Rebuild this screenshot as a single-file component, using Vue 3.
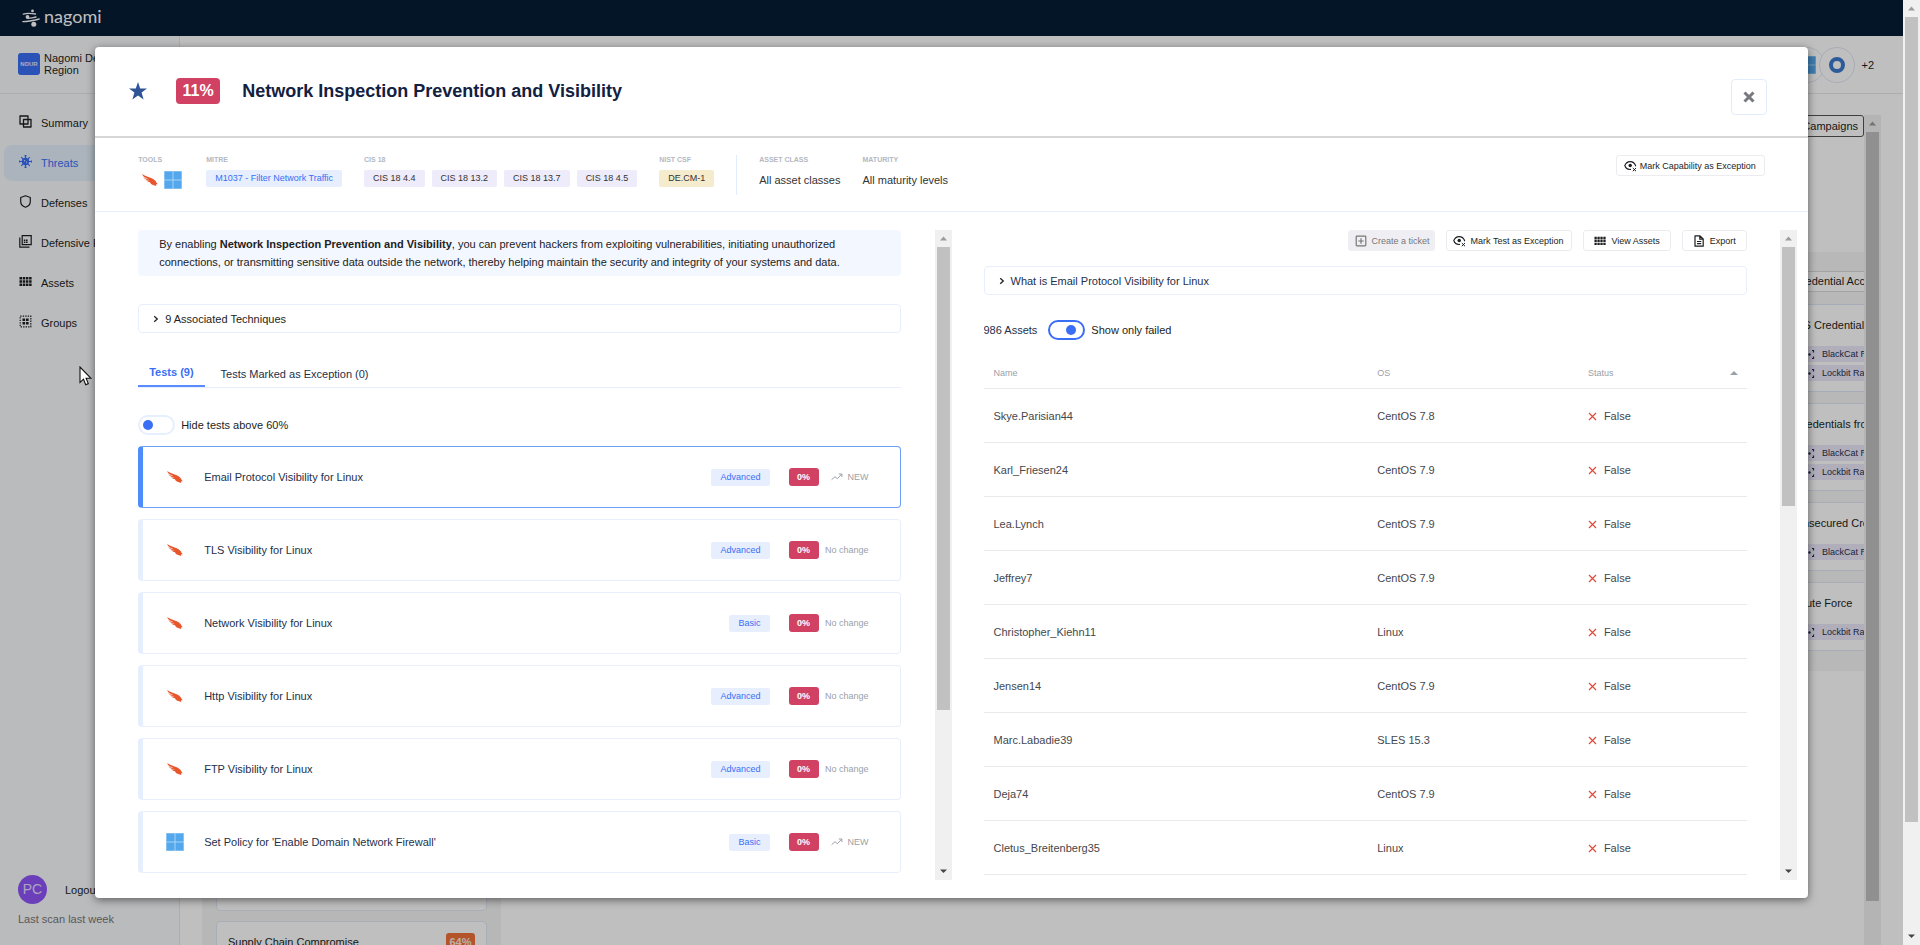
<script setup>
import { ref } from 'vue'

const nav = [
  { label: 'Summary', icon: 'i-summary' },
  { label: 'Threats', icon: 'i-threat', active: true },
  { label: 'Defenses', icon: 'i-shield' },
  { label: 'Defensive Plan', icon: 'i-plan' },
  { label: 'Assets', icon: 'i-grid' },
  { label: 'Groups', icon: 'i-groups' },
]

const cisTags = ['CIS 18 4.4', 'CIS 18 13.2', 'CIS 18 13.7', 'CIS 18 4.5']

const tests = [
  { name: 'Email Protocol Visibility for Linux', level: 'Advanced', score: '0%', trend: 'NEW', icon: 'i-falcon', active: true },
  { name: 'TLS Visibility for Linux', level: 'Advanced', score: '0%', trend: 'No change', icon: 'i-falcon' },
  { name: 'Network Visibility for Linux', level: 'Basic', score: '0%', trend: 'No change', icon: 'i-falcon' },
  { name: 'Http Visibility for Linux', level: 'Advanced', score: '0%', trend: 'No change', icon: 'i-falcon' },
  { name: 'FTP Visibility for Linux', level: 'Advanced', score: '0%', trend: 'No change', icon: 'i-falcon' },
  { name: "Set Policy for 'Enable Domain Network Firewall'", level: 'Basic', score: '0%', trend: 'NEW', icon: 'i-windows' },
]

const assets = [
  ['Skye.Parisian44', 'CentOS 7.8'],
  ['Karl_Friesen24', 'CentOS 7.9'],
  ['Lea.Lynch', 'CentOS 7.9'],
  ['Jeffrey7', 'CentOS 7.9'],
  ['Christopher_Kiehn11', 'Linux'],
  ['Jensen14', 'CentOS 7.9'],
  ['Marc.Labadie39', 'SLES 15.3'],
  ['Deja74', 'CentOS 7.9'],
  ['Cletus_Breitenberg35', 'Linux'],
]

const techniques = [
  { name: 'OS Credential Dumping', tags: ['BlackCat Ransomware', 'Lockbit Ransomware'] },
  { name: 'Credentials from Password Stores', tags: ['BlackCat Ransomware', 'Lockbit Ransomware'] },
  { name: 'Unsecured Credentials', tags: ['BlackCat Ransomware'] },
  { name: 'Brute Force', tags: ['Lockbit Ransomware'] },
]

const hideAbove = ref(false)
const onlyFailed = ref(true)
</script>

<template>
  <div class="window">
    <svg class="symbols" aria-hidden="true">
      <symbol id="i-summary" viewBox="0 0 13 13"><path d="M1 1h8v8H1zM4.500 4.500h7.500v7.500h-7.500z" fill="none" stroke="currentColor" stroke-width="1.300" stroke-linejoin="round" /></symbol>
      <symbol id="i-threat" viewBox="0 0 13 13">
        <circle cx="6.500" cy="6.500" r="3.700" fill="currentColor" />
        <path d="M6.500 0.500v12M0.500 6.500h12M2.200 2.200l8.600 8.600M10.800 2.200L2.200 10.800M5.500 0.600h2M5.500 12.400h2M0.600 5.500v2M12.400 5.500v2" stroke="currentColor" stroke-width="1.200" fill="none" />
        <circle cx="5.600" cy="5.800" r=".7" fill="#cfe0ff" /><circle cx="7.600" cy="7.200" r=".6" fill="#cfe0ff" />
      </symbol>
      <symbol id="i-shield" viewBox="0 0 13 13"><path d="M6.500 .8L11.300 2.500V6.500C11.300 9.300 9.300 11.400 6.500 12.300C3.700 11.400 1.700 9.300 1.700 6.500V2.500z" fill="none" stroke="currentColor" stroke-width="1.200" stroke-linejoin="round" /></symbol>
      <symbol id="i-plan" viewBox="0 0 13 13"><path d="M3.200 .7h9v9h-9zM.8 2.500v9.700h9.700" fill="none" stroke="currentColor" stroke-width="1.200" /><path d="M4.800 4.500h1.600v1.400H4.800zM7 4.500h1.600v1.400H7zM4.800 6.500h1.600v1.400H4.800zM7 6.500h1.600v1.400H7z" fill="currentColor" /></symbol>
      <symbol id="i-grid" viewBox="0 0 13 13"><path d="M.5 2h2.500v2.500H.5zM3.700 2h2.500v2.500H3.700zM6.900 2h2.500v2.500H6.900zM10.100 2h2.500v2.500h-2.500zM.5 5.200h2.500v2.500H.5zM3.700 5.200h2.500v2.500H3.700zM6.900 5.200h2.500v2.500H6.900zM10.100 5.200h2.500v2.500h-2.500zM.5 8.400h2.500v2.500H.5zM3.700 8.400h2.500v2.500H3.700zM6.900 8.400h2.500v2.500H6.900zM10.100 8.400h2.500v2.500h-2.500z" fill="currentColor" /></symbol>
      <symbol id="i-groups" viewBox="0 0 13 13"><rect x="1.200" y="1.200" width="10.600" height="10.600" fill="none" stroke="currentColor" stroke-width="1.200" stroke-dasharray="1.400 1.100" /><path d="M3.500 3.500h2.600v2.600H3.500zM7 3.500h2.600v2.600H7zM3.500 7h2.600v2.600H3.500zM7 7h2.600v2.600H7z" fill="currentColor" /></symbol>
      <symbol id="i-falcon" viewBox="0 0 16 12"><path d="M.2 0C2.500 2 6.200 2.700 9.700 4.300C12.500 5.600 14.200 7.200 14.500 8.800C15 9.200 15.500 9.700 15.600 10.500C15 10.200 14.400 10.300 14 10.500C14.200 11 14.300 11.400 14.200 12C13.200 11.300 12.300 11.200 11.200 10.900C9.300 10.400 8 9.500 8.100 8.300C6.600 7.800 4.900 7.200 4 5.900C5.300 6.500 6.500 6.700 7.700 6.900C5.200 6 2.200 4.900 1.300 2.900C2.900 4.200 4.600 4.800 6.600 5.200C4.200 4 .9 3 .2 0z" fill="#e8562c" /></symbol>
      <symbol id="i-windows" viewBox="0 0 18 18"><path d="M0 0h18v18H0z" fill="#a9d4f7" /><path d="M.6.6h7.900v7.900H.6zM9.500.6h7.900v7.900H9.500zM.6 9.500h7.900v7.900H.6zM9.500 9.500h7.900v7.900H9.500z" fill="#53a7ec" /></symbol>
      <symbol id="i-eye" viewBox="0 0 13 12"><path d="M7 9.400C4 9.800 1.600 8 .8 5.500C1.800 3 3.800 1.600 6.200 1.600S10.600 3 11.600 5.500L11.300 6.300" fill="none" stroke="currentColor" stroke-width="1.100" /><circle cx="6.200" cy="5.500" r="1.700" fill="currentColor" /><path d="M8.800 8l3.200 3.200M12 8l-3.200 3.200" stroke="currentColor" stroke-width="1" /></symbol>
      <symbol id="i-plus" viewBox="0 0 12 12"><rect x="1.200" y="1.200" width="9.600" height="9.600" rx=".8" fill="none" stroke="currentColor" stroke-width="1.200" /><path d="M6 3.300v5.400M3.300 6h5.400" stroke="currentColor" stroke-width="1.200" /></symbol>
      <symbol id="i-doc" viewBox="0 0 12 12"><path d="M2 .8h5L10.200 4v7.200H2zM6.800.8v3.400h3.400M4 6.500h4.200M4 8.700h4.200" fill="none" stroke="currentColor" stroke-width="1.200" stroke-linejoin="round" /></symbol>
      <symbol id="i-chevron" viewBox="0 0 6 8"><path d="M1.200 1.200L4.300 4L1.200 6.800" fill="none" stroke="currentColor" stroke-width="1.300" /></symbol>
      <symbol id="i-trend" viewBox="0 0 12 8"><path d="M.6 6.700L4 3.700l2.300 2L10.600 1.300M7.800 1h3.100v3" fill="none" stroke="currentColor" stroke-width="1" /></symbol>
      <symbol id="i-x" viewBox="0 0 9 9"><path d="M1 1l7 7M8 1L1 8" stroke="#e04a3a" stroke-width="1.200" /></symbol>
      <symbol id="i-focus" viewBox="0 0 11 11"><path d="M1.500 3.500V1.500h1.500M8 1.500h1.500v2M9.500 7.500v2H8M3 9.500H1.500v-2" fill="none" stroke="currentColor" stroke-width="1.200" /><circle cx="5.500" cy="5.500" r="1.200" fill="currentColor" /></symbol>
      <symbol id="i-up" viewBox="0 0 17 17"><path d="M8.500 6.500L12 10.500H5z" fill="currentColor" /></symbol>
      <symbol id="i-down" viewBox="0 0 17 17"><path d="M8.500 10L12 6.500H5z" fill="currentColor" /></symbol>
    </svg>

    <div class="page">
      <header class="brand">
        <svg class="logo" viewBox="0 0 18 18"><g fill="none" stroke="#fff" stroke-width="1.300" stroke-linecap="round"><path d="M1.300 5.200C5 4 10 4.500 13.500 5M.8 12.600C6 12.600 12 11.300 17.200 10M6 9.200C8 9.400 11 8.500 14 8" /></g><circle cx="10.500" cy="1.900" r="1.400" fill="#fff" /><circle cx="5.500" cy="8" r="1.900" fill="#fff" /><circle cx="11.800" cy="15.300" r="2.500" fill="#fff" /></svg>
        <span class="brand-name">nagomi</span>
      </header>
      <div class="shell">
        <aside class="sidebar">
          <div class="tenant"><span class="tenant-logo">NDUR</span><span class="tenant-name">Nagomi Demo<br>Region</span></div>
          <nav class="nav">
            <a v-for="n in nav" :key="n.label" href="#" class="nav-item" :class="{ on: n.active }"><svg class="nav-icon"><use :href="'#' + n.icon" /></svg><span>{{ n.label }}</span></a>
          </nav>
          <div class="account"><span class="avatar">PC</span><a href="#" class="logout">Logout</a></div>
          <div class="last-scan">Last scan last week</div>
        </aside>
        <main class="main">
          <div class="topbar">
            <span class="vendor"></span><span class="vendor"></span><span class="vendor"></span>
            <span class="vendor"><svg class="vendor-win"><use href="#i-windows" /></svg></span>
            <span class="vendor"><svg class="vendor-ring" viewBox="0 0 18 18"><circle cx="9" cy="9" r="6" fill="none" stroke="#3d78cc" stroke-width="4" /></svg></span>
            <span class="more">+2</span>
          </div>
          <div class="board-area">
            <div class="board">
              <div class="board-top"><button class="campaigns" type="button">Campaigns</button></div>
              <div class="board-cols">
                <section class="col-left">
                  <div class="left-card left-card-tall"></div>
                  <div class="left-card"><span>Supply Chain Compromise</span><b class="pct">64%</b></div>
                </section>
                <section class="col-right">
                  <h3 class="col-title">Credential Access</h3>
                  <article v-for="t in techniques" :key="t.name" class="tech">
                    <div class="tech-name">{{ t.name }}</div>
                    <div v-for="g in t.tags" :key="g" class="tech-tag"><svg class="focus"><use href="#i-focus" /></svg>{{ g }}</div>
                  </article>
                </section>
              </div>
            </div>
            <div class="bar bar-dark"><svg class="arrow"><use href="#i-up" /></svg><div class="track"><div class="thumb" :style="{ flexGrow: 946 }"></div><div :style="{ flexGrow: 54 }"></div></div></div>
          </div>
        </main>
      </div>
    </div>

    <div class="bar page-bar"><svg class="arrow"><use href="#i-up" /></svg><div class="track"><div class="thumb" :style="{ flexGrow: 884 }"></div><div :style="{ flexGrow: 116 }"></div></div><svg class="arrow arrow-on"><use href="#i-down" /></svg></div>

    <div class="overlay">
      <section class="modal" role="dialog" aria-labelledby="modal-title">
        <header class="modal-head">
          <svg class="star" viewBox="0 0 18 18"><path d="M9 0l2.200 6.400H18l-5.400 4.100L14.600 17.500L9 13.400L3.400 17.500L5.400 10.500L0 6.400h6.800z" fill="#2f5597" /></svg>
          <span class="score-lg">11%</span>
          <h1 id="modal-title" class="title">Network Inspection Prevention and Visibility</h1>
          <button class="close" type="button" aria-label="Close"><svg class="close-icon" viewBox="0 0 12 12"><path d="M1.500 1.500l9 9M10.500 1.500l-9 9" stroke="#77797f" stroke-width="3" /></svg></button>
        </header>

        <div class="meta">
          <div class="meta-group"><span class="cap">TOOLS</span><div class="tools"><svg class="falcon"><use href="#i-falcon" /></svg><svg class="win"><use href="#i-windows" /></svg></div></div>
          <div class="meta-group"><span class="cap">MITRE</span><div class="tags"><span class="tag blue">M1037 - Filter Network Traffic</span></div></div>
          <div class="meta-group"><span class="cap">CIS 18</span><div class="tags"><span v-for="c in cisTags" :key="c" class="tag violet">{{ c }}</span></div></div>
          <div class="meta-group"><span class="cap">NIST CSF</span><div class="tags"><span class="tag sand">DE.CM-1</span></div></div>
          <div class="rule"></div>
          <div class="meta-group"><span class="cap">ASSET CLASS</span><span class="meta-value">All asset classes</span></div>
          <div class="meta-group"><span class="cap">MATURITY</span><span class="meta-value">All maturity levels</span></div>
          <button class="btn mark-cap" type="button"><svg class="btn-eye"><use href="#i-eye" /></svg>Mark Capability as Exception</button>
        </div>

        <div class="body">
          <div class="pane pane-left">
            <div class="content">
              <p class="intro">By enabling <b>Network Inspection Prevention and Visibility</b>, you can prevent hackers from exploiting vulnerabilities, initiating unauthorized connections, or transmitting sensitive data outside the network, thereby helping maintain the security and integrity of your systems and data.</p>
              <button class="fold fold-left" type="button"><svg class="chev"><use href="#i-chevron" /></svg>9 Associated Techniques</button>
              <div class="tabs" role="tablist">
                <button class="tab on" type="button" role="tab" aria-selected="true">Tests (9)</button>
                <button class="tab" type="button" role="tab" aria-selected="false">Tests Marked as Exception (0)</button>
              </div>
              <label class="toggle-row hide-row"><input v-model="hideAbove" class="toggle" type="checkbox">Hide tests above 60%</label>
              <div class="tests">
                <article v-for="t in tests" :key="t.name" class="test" :class="{ on: t.active }">
                  <span class="test-icon"><svg :class="t.icon === 'i-windows' ? 'win' : 'falcon'"><use :href="'#' + t.icon" /></svg></span>
                  <span class="test-name">{{ t.name }}</span>
                  <span class="tag blue">{{ t.level }}</span>
                  <b class="score">{{ t.score }}</b>
                  <span class="trend"><svg v-if="t.trend === 'NEW'" class="trend-icon"><use href="#i-trend" /></svg>{{ t.trend }}</span>
                </article>
              </div>
            </div>
            <div class="bar"><svg class="arrow"><use href="#i-up" /></svg><div class="track"><div class="thumb" :style="{ flexGrow: 463 }"></div><div :style="{ flexGrow: 153 }"></div></div><svg class="arrow arrow-on"><use href="#i-down" /></svg></div>
          </div>

          <div class="pane pane-right">
            <div class="content">
              <div class="actions">
                <button class="btn muted" type="button" disabled><svg class="btn-icon"><use href="#i-plus" /></svg>Create a ticket</button>
                <button class="btn btn-tight" type="button"><svg class="btn-eye"><use href="#i-eye" /></svg>Mark Test as Exception</button>
                <button class="btn" type="button"><svg class="btn-icon"><use href="#i-grid" /></svg>View Assets</button>
                <button class="btn" type="button"><svg class="btn-icon"><use href="#i-doc" /></svg>Export</button>
              </div>
              <button class="fold fold-right" type="button"><svg class="chev"><use href="#i-chevron" /></svg>What is Email Protocol Visibility for Linux</button>
              <div class="count-row"><span class="count">986 Assets</span><label class="toggle-row"><input v-model="onlyFailed" class="toggle" type="checkbox">Show only failed</label></div>
              <table class="assets">
                <thead><tr><th class="c-name">Name</th><th class="c-os">OS</th><th><span class="th-status">Status<svg class="sort" viewBox="0 0 8 4"><path d="M4 0L8 4H0z" fill="#9aa0aa" /></svg></span></th></tr></thead>
                <tbody><tr v-for="a in assets" :key="a[0]"><td>{{ a[0] }}</td><td>{{ a[1] }}</td><td><span class="status"><svg class="x"><use href="#i-x" /></svg>False</span></td></tr></tbody>
              </table>
            </div>
            <div class="bar"><svg class="arrow"><use href="#i-up" /></svg><div class="track"><div class="thumb" :style="{ flexGrow: 259 }"></div><div :style="{ flexGrow: 357 }"></div></div><svg class="arrow arrow-on"><use href="#i-down" /></svg></div>
          </div>
        </div>
      </section>
    </div>

    <svg class="cursor" viewBox="0 0 13 20"><path d="M1 1v15.500l3.500-3.300L6.700 18.700l2.600-1.100L7.100 12.300H12z" fill="#fff" stroke="#111" stroke-width="1.100" /></svg>
  </div>
</template>

<style>
html, body { margin: 0; overflow: hidden; }
</style>

<style scoped>
.window, .window * { box-sizing: border-box; }
.window { position: relative; display: flex; height: 100vh; overflow: hidden; background: #fff; font-family: "Liberation Sans", Arial, sans-serif; font-size: 11px; color: #1c1e22; }
.window button { font: inherit; color: inherit; cursor: pointer; }
.window a { color: inherit; text-decoration: none; }
.window svg { display: block; flex: none; }
.window .symbols { position: absolute; width: 0; height: 0; }

.page { flex: 1; min-width: 0; display: flex; flex-direction: column; }
.brand { flex: none; height: 36px; display: flex; align-items: center; gap: 4px; padding-left: 22px; background: #071c36; color: #fff; }
.logo { width: 18px; height: 18px; }
.brand-name { font-family: Lato, sans-serif; font-size: 18px; line-height: 20px; padding-bottom: 5px; }
.shell { flex: 1; min-height: 0; display: flex; }
.sidebar { flex: none; width: 180px; display: flex; flex-direction: column; background: #f9fafc; border-right: 1px solid #e4e7ec; }
.tenant { height: 58px; display: flex; align-items: center; gap: 4px; padding: 0 0 2px 18px; border-bottom: 1px solid #e4e7ec; line-height: 12px; }
.tenant-logo { width: 22px; height: 22px; border-radius: 3px; background: #3a6ef5; color: #dfe8ff; font-size: 6px; font-weight: bold; line-height: 22px; text-align: center; }
.nav { flex: 1; display: flex; flex-direction: column; gap: 4px; padding: 11px 4px; }
.nav-item { height: 36px; display: flex; align-items: center; gap: 9px; padding-left: 15px; border-radius: 8px; }
.window .nav-item.on { background: #e4f0fd; color: #3a6ef5; }
.nav-icon { width: 13px; height: 13px; margin-bottom: 4px; }
.account { display: flex; align-items: center; gap: 18px; padding-left: 18px; }
.avatar { width: 29px; height: 29px; border-radius: 50%; background: #9055f8; color: #e6dcff; font-size: 14px; line-height: 29px; text-align: center; }
.last-scan { padding: 8px 0 19px 18px; line-height: 14px; color: #777; }
.main { flex: 1; min-width: 0; display: flex; flex-direction: column; }
.topbar { flex: none; height: 58px; display: flex; align-items: center; justify-content: flex-end; padding-right: 29px; border-bottom: 1px solid #e4e7ec; }
.vendor { width: 36px; height: 36px; margin-left: -6px; display: grid; place-items: center; border: 1px solid #dfe6f3; border-radius: 50%; background: #fff; }
.vendor-win, .vendor-ring { width: 18px; height: 18px; }
.more { margin-left: 6px; }
.board-area { flex: 1; min-height: 0; display: flex; padding: 21px 22px 0 22px; }
.board { flex: 1; min-width: 0; overflow: hidden; display: flex; flex-direction: column; }
.board-top { height: 137px; flex: none; display: flex; justify-content: flex-end; align-items: flex-start; }
.campaigns { height: 22px; padding: 0 5px; background: #fff; border: 1px solid #555; border-radius: 3px; }
.board-cols { flex: 1; min-height: 0; display: flex; justify-content: space-between; align-items: flex-start; }
.col-left { width: 299px; padding: 13px 14px; display: flex; flex-direction: column; gap: 10px; background: #f5f5f5; }
.left-card { height: 60px; display: flex; justify-content: space-between; align-items: flex-start; padding: 11px; border: 1px solid #e0e8f6; border-radius: 4px; background: #fff; line-height: 18px; }
.left-card-tall { height: 646px; }
.pct { width: 29px; border-radius: 3px; background: #f0713a; color: #ffe9df; font-size: 11px; text-align: center; }
.col-right { width: 89px; height: 419px; padding: 19px 0 0 13px; background: #f6f6f6; white-space: nowrap; }
.col-title { margin: 0 0 12px; height: 21px; border: 1px solid #dadada; border-right: 0; padding-left: 5px; font-size: 11px; font-weight: normal; line-height: 19px; background: #fff; }
.tech { margin-bottom: 11px; padding: 11px 0 10px 6px; border: 1px solid #dfe6f5; border-right: 0; background: #fff; }
.tech-name { line-height: 18px; margin-bottom: 12px; }
.tech-tag { height: 16px; margin-top: 3px; display: flex; align-items: center; gap: 7px; padding-left: 9px; background: #ece8fa; color: #24304e; font-size: 9px; }
.focus { width: 11px; height: 11px; }

.bar { flex: none; width: 17px; display: flex; flex-direction: column; background: #f0f0f0; color: #9c9c9c; }
.arrow { width: 17px; height: 17px; }
.arrow-on { color: #444; }
.track { flex: 1; display: flex; flex-direction: column; padding: 0 2px; }
.thumb { background: #c1c1c1; }

.overlay { position: absolute; inset: 0 17px 0 0; display: grid; place-items: center; background: rgba(0, 0, 0, .25); }
.modal { width: 90%; height: 90%; display: flex; flex-direction: column; overflow: hidden; border-radius: 4px; background: #fff; box-shadow: 0 2px 9px rgba(0, 0, 0, .5); }
.modal-head { flex: none; height: 91px; display: flex; align-items: center; padding: 0 41px 1px 34px; border-bottom: 2px solid #d6d6d6; }
.star { width: 18px; height: 18px; margin-right: 29px; }
.score-lg { width: 44px; height: 26px; border-radius: 4px; background: #d14163; color: #fff; font-size: 16px; font-weight: bold; line-height: 26px; text-align: center; }
.title { margin: 0 auto 0 22px; color: #12213f; font-size: 18px; line-height: 24px; }
.close { width: 36px; height: 36px; margin-top: 12px; padding: 0; display: grid; place-items: center; background: #fff; border: 1px solid #e3ecfb; border-radius: 4px; }
.close-icon { width: 12px; height: 12px; }

.meta { flex: none; height: 74px; display: flex; align-items: flex-start; gap: 22px; padding: 17px 43px 0; border-bottom: 1px solid #e8effc; }
.meta-group { display: flex; flex-direction: column; }
.cap { color: #b3b8c2; font-size: 7px; font-weight: bold; line-height: 10px; margin-bottom: 5px; }
.tools { display: flex; align-items: center; gap: 6px; padding: 1px 2px 0 4px; }
.falcon { width: 16px; height: 12px; }
.win { width: 18px; height: 18px; }
.tags { display: flex; gap: 7px; }
.tag { height: 17px; padding: 0 9px; border-radius: 2px; font-size: 9px; line-height: 17px; white-space: nowrap; }
.blue { background: #e7effe; color: #3a6ef5; }
.violet { background: #eeebfb; color: #333; }
.sand { background: #f5ebcd; color: #333; }
.rule { width: 1px; height: 40px; background: #e3ecfb; }
.meta-value { line-height: 14px; padding-top: 3px; color: #333; }
.btn { height: 21px; display: flex; align-items: center; gap: 5px; padding: 0 10px; background: #fff; border: 1px solid #ececf0; border-radius: 3px; white-space: nowrap; }
.window .btn { font-size: 9px; }
.window .mark-cap { margin-left: auto; padding: 0 8px 0 7px; gap: 3px; }
.window .btn-tight { padding: 0 8px 0 6px; }
.btn-eye { width: 13px; height: 12px; }
.btn-icon { width: 12px; height: 12px; }
.window .muted { padding: 0 4px 0 6px; background: #efeff3; border-color: #efeff3; color: #777; }

.body { flex: 1; min-height: 0; display: flex; padding: 18px 0; }
.pane { flex: 1 1 0; min-width: 0; display: flex; }
.pane-left { padding-left: 43px; gap: 34px; }
.pane-right { padding: 0 11px 0 32px; gap: 33px; }
.content { flex: 1; min-width: 0; overflow: hidden; }
.intro { margin: 0 0 28px; padding: 5px 50px 5px 21px; border-radius: 4px; background: #f3f7ff; line-height: 18px; color: #222; }
.fold { width: 100%; height: 29px; display: flex; align-items: center; gap: 6px; padding: 0 14px; background: #fff; border: 1px solid #e8effc; border-radius: 4px; }
.fold-right { margin-top: 15px; }
.window .fold-right { color: #24304a; }
.chev { width: 6px; height: 8px; color: #222; }
.tabs { margin-top: 26px; height: 29px; display: flex; align-items: stretch; border-bottom: 1px solid #e8effc; }
.tab { padding: 2px 16px 0; background: none; border: 0; }
.window .tab { color: #24304a; }
.window .tab.on { padding: 0 11px; border-bottom: 2px solid #5a8bff; color: #3a6ef5; font-weight: bold; }
.toggle-row { display: flex; align-items: center; gap: 6px; line-height: 20px; }
.hide-row { margin-top: 27px; }
.toggle { appearance: none; width: 37px; height: 20px; margin: 0; padding: 0 3px; display: flex; align-items: center; border: 2px solid #e6effe; border-radius: 10px; background: #fff; }
.toggle::before { content: ""; width: 10px; height: 10px; border-radius: 50%; background: #3a6ef5; }
.toggle:checked { border-color: #3a6ef5; padding-left: 16px; }
.tests { margin-top: 11px; display: flex; flex-direction: column; gap: 11px; }
.test { height: 62px; display: flex; align-items: center; padding-right: 31px; border: 1px solid #e8effc; border-left: 5px solid #e6effe; border-radius: 4px; color: #24304a; }
.test.on { border-color: #6b9ff8; border-left-color: #4d8dfa; }
.test-icon { width: 61px; display: grid; place-items: center; padding-left: 2px; }
.test-name { flex: 1; }
.score { width: 30px; height: 18px; margin-left: 19px; border-radius: 3px; background: #d14163; color: #fff; font-size: 9px; line-height: 18px; text-align: center; }
.trend { width: 50px; display: flex; justify-content: flex-end; align-items: center; gap: 5px; color: #9a9fa9; font-size: 9px; white-space: nowrap; }
.trend-icon { width: 12px; height: 8px; }

.actions { display: flex; justify-content: flex-end; gap: 11px; }
.count-row { margin-top: 25px; display: flex; align-items: center; gap: 11px; color: #24304a; }
.count-row .toggle-row { color: #1c1e22; }
.assets { width: 100%; margin-top: 17px; border-collapse: separate; border-spacing: 0; table-layout: fixed; }
.assets th { height: 32px; padding: 0 9px; border-bottom: 1px solid #e9e9ec; color: #9aa0aa; font-size: 9px; font-weight: normal; text-align: left; }
.assets td { height: 54px; padding: 1px 9px 0; border-bottom: 1px solid #e9e9ec; color: #44474d; }
.assets th:first-child, .assets td:first-child { padding-left: 10px; }
.c-name { width: 50.4%; }
.c-os { width: 27.6%; }
.th-status { display: flex; justify-content: space-between; align-items: center; }
.sort { width: 8px; height: 4px; }
.status { display: flex; align-items: center; gap: 7px; }
.x { width: 9px; height: 9px; }

.cursor { position: absolute; left: 79px; top: 366px; width: 13px; height: 20px; }
</style>
